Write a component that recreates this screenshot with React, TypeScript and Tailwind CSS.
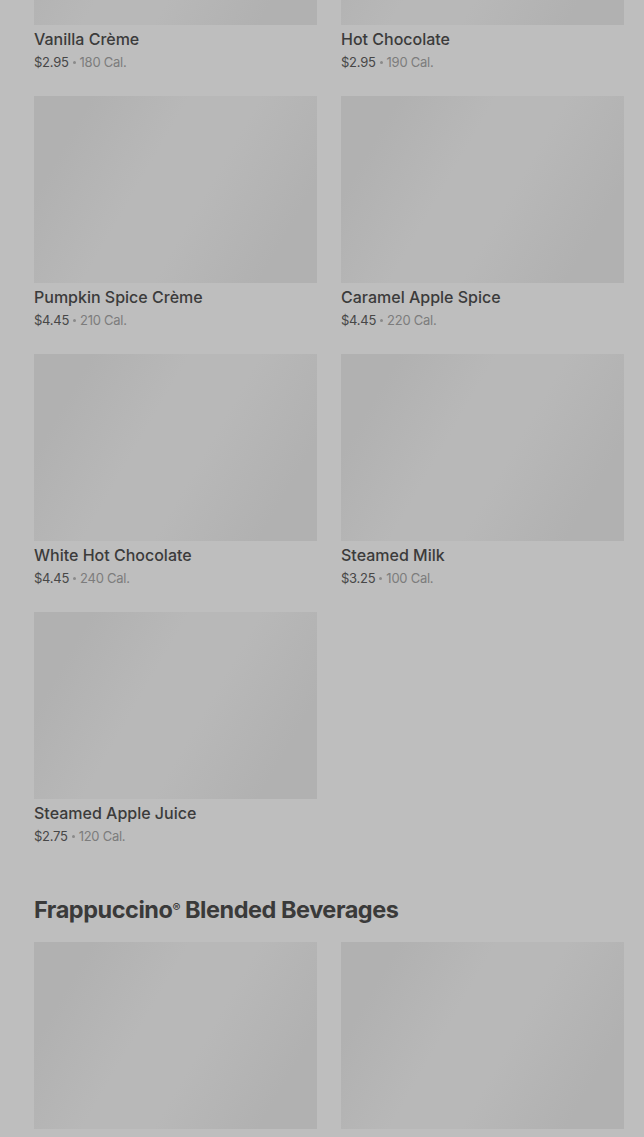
import React from 'react'

const hot = [
    { name: 'Vanilla Crème', price: '$2.95', cal: '180' },
    { name: 'Hot Chocolate', price: '$2.95', cal: '190' },
    { name: 'Pumpkin Spice Crème', price: '$4.45', cal: '210' },
    { name: 'Caramel Apple Spice', price: '$4.45', cal: '220' },
    { name: 'White Hot Chocolate', price: '$4.45', cal: '240' },
    { name: 'Steamed Milk', price: '$3.25', cal: '100' },
    { name: 'Steamed Apple Juice', price: '$2.75', cal: '120' },
]

const frapp = [
    { name: 'Caramel Ribbon Crunch Frappuccino', price: '$5.45', cal: '470' },
    { name: 'Mocha Cookie Crumble Frappuccino', price: '$5.45', cal: '480' },
]

function Card({ name, price, cal }) {
    return (
        <div className="flex flex-col">
            <div className="h-[187px] w-full bg-[linear-gradient(120deg,#b1b1b1_15%,#b8b8b8_40%,#b8b8b8_58%,#b1b1b1_85%)]"></div>
            <p className="mt-[2px] text-[16px] leading-[24px] font-medium text-[#3b3b3b]">{name}</p>
            <p className="mt-[1px] flex items-center text-[13px] leading-[20px] tracking-[-0.02em] text-[#474747]">
                <span>{price}</span>
                <span className="mx-[4px] h-[3px] w-[3px] rounded-full bg-[#8a8a8a]"></span>
                <span className="text-[#7c7c7c]">{cal} Cal.</span>
            </p>
        </div>
    )
}

export default function App() {
    return (
        <div className="h-[1137px] w-full overflow-hidden bg-[#bebebe] font-['Inter',sans-serif]">
            <div className="mt-[-162px] pl-[34px] pr-[20px]">
                <div className="grid grid-cols-2 gap-x-6 gap-y-6">
                    {hot.map((item) => <Card key={item.name} {...item} />)}
                </div>
                <h2 className="mt-[48px] mb-[16px] text-[23.5px] leading-[32px] font-bold tracking-[-0.02em] text-[#3a3a3a]">
                    Frappuccino<sup className="text-[12px] font-semibold">®</sup> Blended Beverages
                </h2>
                <div className="grid grid-cols-2 gap-x-6 gap-y-6">
                    {frapp.map((item) => <Card key={item.name} {...item} />)}
                </div>
            </div>
        </div>
    )
}
